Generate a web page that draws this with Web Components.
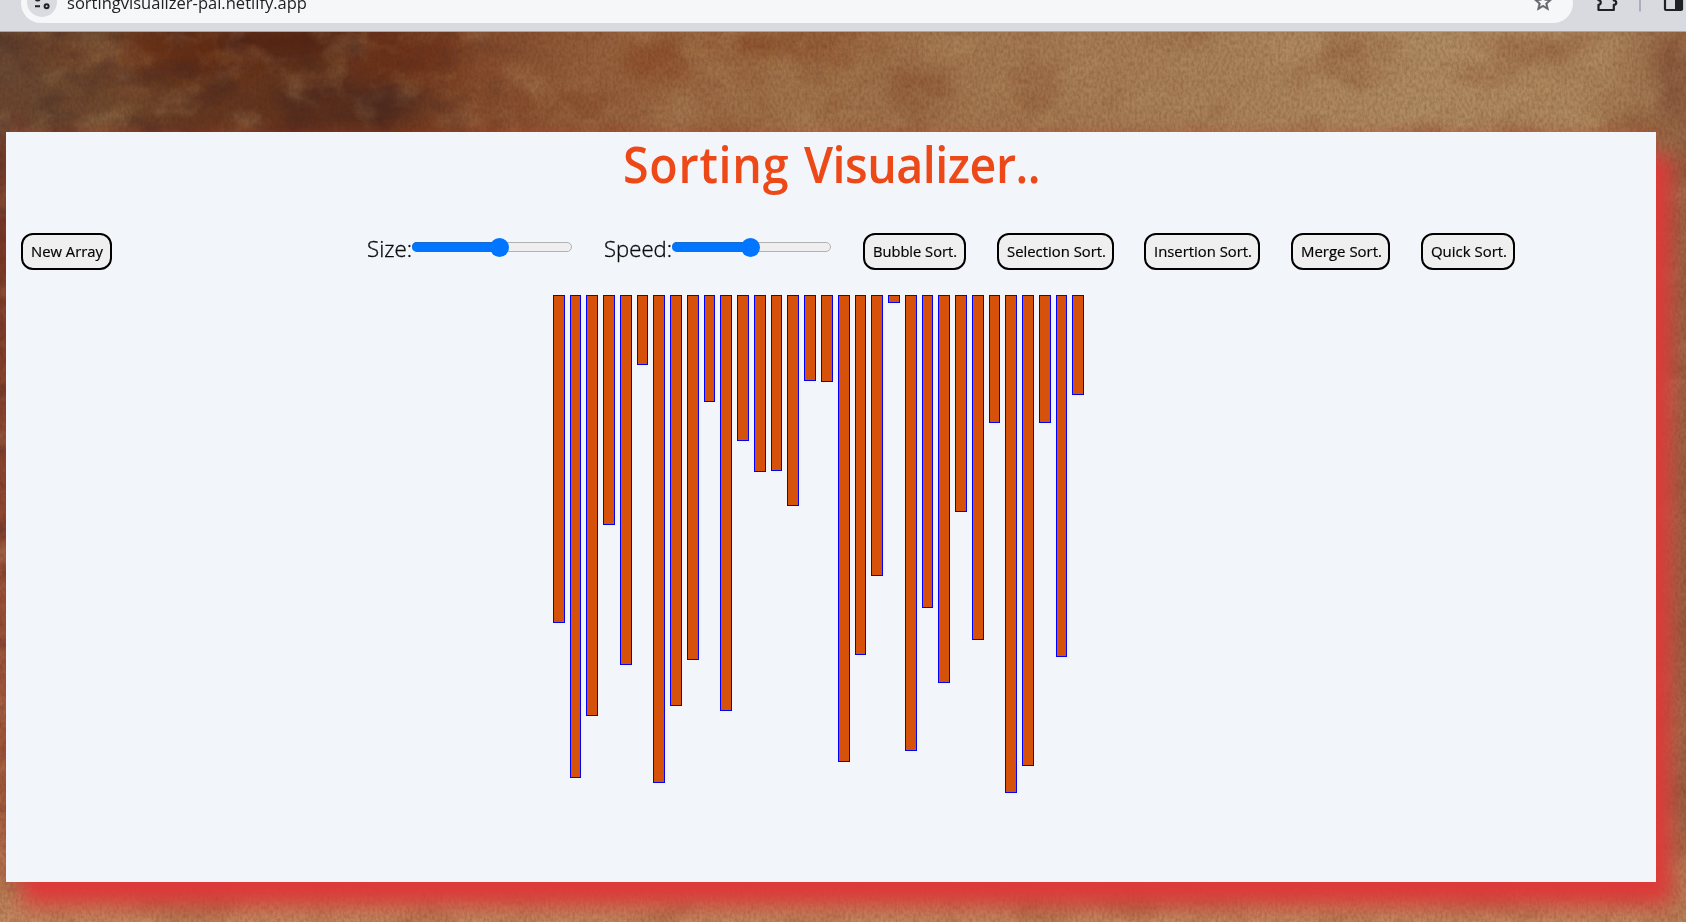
<!DOCTYPE html>
<html lang="en">
<head>
<meta charset="utf-8">
<title>Sorting Visualizer</title>
<style>
html,body{margin:0;height:100%;overflow:hidden}
body{font-family:"Open Sans","Noto Sans",sans-serif}
</style>
</head>
<body>
<sorting-app></sorting-app>
<script>
const define = (name, html, setup) => customElements.define(name, class extends HTMLElement {
  constructor(){ super(); this.attachShadow({mode:'open'}).innerHTML = html; }
  connectedCallback(){ if (setup) setup(this, this.shadowRoot); }
});

/* Text condensed or widened to a given advance width */
define('fit-text', `<style>
:host{display:block;white-space:nowrap;overflow:visible}
span{display:inline-block;transform-origin:0 50%}
</style><span><slot></slot></span>`, (el, root) => {
  const w = +el.getAttribute('w'), s = root.querySelector('span');
  el.style.width = w + 'px';
  const real = s.offsetWidth;
  if (real) s.style.transform = `scaleX(${w / s.getBoundingClientRect().width})`;
});

define('parchment-backdrop', `<style>
:host{display:block;position:absolute;inset:0;z-index:-1}
svg{display:block;width:100%;height:100%}
</style>
<svg viewBox="0 0 1686 890" preserveAspectRatio="none">
<defs>
<linearGradient id="h"><stop offset="0" stop-color="#684a34"/><stop offset=".07" stop-color="#70482d"/><stop offset=".13" stop-color="#64361f"/><stop offset=".23" stop-color="#66371f"/><stop offset=".28" stop-color="#854a2b"/><stop offset=".36" stop-color="#98623e"/><stop offset=".46" stop-color="#a2734b"/><stop offset=".64" stop-color="#a77c54"/><stop offset=".85" stop-color="#b18c63"/><stop offset=".95" stop-color="#ae865d"/><stop offset="1" stop-color="#946443"/></linearGradient>
<linearGradient id="v" x2="0" y2="1"><stop offset="0" stop-color="#6e3527" stop-opacity="0"/><stop offset=".14" stop-color="#6e3527" stop-opacity=".3"/><stop offset=".22" stop-color="#703828"/><stop offset=".45" stop-color="#824630"/><stop offset=".7" stop-color="#9c5c3e"/><stop offset="1" stop-color="#a86b46"/></linearGradient>
<linearGradient id="foot" x2="0" y2="1"><stop offset="0" stop-color="#b87c54" stop-opacity="0"/><stop offset=".6" stop-color="#b87c54"/><stop offset="1" stop-color="#c58a60"/></linearGradient>
<filter id="blotch" x="0" y="0" width="1" height="1" color-interpolation-filters="sRGB"><feTurbulence type="fractalNoise" baseFrequency=".013 .018" numOctaves="6" seed="8"/><feColorMatrix values="0 0 0 0 .5  0 0 0 0 .25  0 0 0 0 .13  2.8 0 0 0 -1.35"/></filter>
<filter id="light" x="0" y="0" width="1" height="1" color-interpolation-filters="sRGB"><feTurbulence type="fractalNoise" baseFrequency=".02 .026" numOctaves="6" seed="21"/><feColorMatrix values="0 0 0 0 .72  0 0 0 0 .58  0 0 0 0 .4  0 2.4 0 0 -1.15"/></filter>
<filter id="dark" x="0" y="0" width="1" height="1" color-interpolation-filters="sRGB"><feTurbulence type="fractalNoise" baseFrequency=".025 .035" numOctaves="6" seed="4"/><feColorMatrix values="0 0 0 0 .26  0 0 0 0 .15  0 0 0 0 .14  0 0 3 0 -1.45"/></filter>
<filter id="grain" x="0" y="0" width="1" height="1" color-interpolation-filters="sRGB"><feTurbulence type="fractalNoise" baseFrequency=".37 .23" numOctaves="3" seed="3"/><feColorMatrix values="0 0 0 0 .25  0 0 0 0 .14  0 0 0 0 .08  1 0 0 0 -.32"/></filter>
<linearGradient id="fadeL"><stop offset="0" stop-color="#fff"/><stop offset=".25" stop-color="#fff"/><stop offset=".33" stop-color="#000"/></linearGradient>
<mask id="m"><rect width="1686" height="890" fill="url(#fadeL)"/></mask>
<filter id="soft" x="-1" y="-1" width="3" height="3"><feGaussianBlur stdDeviation="9"/></filter>
</defs>
<rect width="1686" height="890" fill="url(#h)"/>
<rect width="30" height="890" fill="url(#v)"/>
<rect y="780" width="1686" height="110" fill="url(#foot)"/>
<g filter="url(#soft)" opacity=".6">
<ellipse cx="195" cy="18" rx="75" ry="30" fill="#632710"/><ellipse cx="280" cy="8" rx="60" ry="22" fill="#4e1c0b"/><ellipse cx="400" cy="22" rx="55" ry="35" fill="#6d2d13"/><ellipse cx="350" cy="70" rx="75" ry="23" fill="#4b281a"/><ellipse cx="740" cy="15" rx="42" ry="16" fill="#85421f"/><ellipse cx="835" cy="12" rx="55" ry="22" fill="#8c4e2b"/><ellipse cx="655" cy="30" rx="35" ry="20" fill="#8b4722"/><ellipse cx="920" cy="57" rx="34" ry="30" fill="#8d5436"/><ellipse cx="1670" cy="45" rx="12" ry="40" fill="#7e4830"/>
</g>
<rect width="1686" height="890" filter="url(#blotch)" opacity=".33"/>
<rect width="1686" height="890" filter="url(#light)" opacity=".4"/>
<g mask="url(#m)"><rect width="1686" height="780" filter="url(#dark)" opacity=".4"/></g>
<rect width="1686" height="890" filter="url(#grain)" opacity=".42"/>
</svg>`);

define('browser-bar', `<style>
:host{display:flex;box-sizing:border-box;height:32px;padding-left:21px;background:#d9dadf;border-bottom:1px solid #a4a7b1;overflow:hidden;align-items:flex-start}
.pill{box-sizing:border-box;width:1552px;height:40px;margin-top:-17px;border-radius:20px;background:#f6f7f9;display:flex;align-items:flex-start;padding-left:6px;flex:none}
.site{width:30px;height:30px;margin-top:4px;flex:none}
fit-text{margin:8px 0 0 10px;font-size:16.4px;line-height:24px;color:#202124}
.star{width:22px;height:22px;margin:8px 19px 0 auto;flex:none}
.tools{display:block;width:113px;height:32px;flex:none}
</style>
<div class="pill">
<svg class="site" viewBox="27 -13 30 30"><circle cx="42" cy="2" r="15" fill="#dadbe0"/><g fill="none" stroke="#202124" stroke-width="2"><path d="M35 6.2h5M44.500-1.500h5"/><circle cx="46.600" cy="6.200" r="2"/><circle cx="37.700" cy="-1.500" r="2"/></g></svg>
<fit-text w="240">sortingvisualizer-pal.netlify.app</fit-text>
<svg class="star" viewBox="0 0 24 24"><path d="M22 9.240l-7.190-.62L12 2 9.190 8.630 2 9.240l5.460 4.730L5.820 21 12 17.270 18.180 21l-1.630-7.030zM12 15.400l-3.760 2.270 1-4.280-3.320-2.880 4.380-.38L12 6.100l1.710 4.040 4.380.38-3.320 2.880 1 4.280z" fill="#5f6368" stroke="#5f6368" stroke-width=".6"/></svg>
</div>
<svg class="tools" viewBox="1573 0 113 32"><g fill="none" stroke="#202124" stroke-width="2.200"><path d="M1598.500-2v2.200c3 .3 3 4.200 0 4.700v5.100h15.300v-5.100c3.300-.4 3.300-4 0-4.400V-3" stroke-linejoin="round"/></g><path d="M1640-5V11.500" stroke="#a9adbd" stroke-width="2"/><rect x="1665" y="-7" width="17" height="17" rx="1" fill="none" stroke="#202124" stroke-width="2.200"/><path d="M1675-7h8v17h-8z" fill="#202124"/></svg>`);

define('sort-button', `<style>
:host{display:block;flex:none}
button{box-sizing:border-box;width:100%;height:37px;padding:0 0 0 8px;border:2px solid #000;border-radius:12px;background:#efefef;color:#000;font:15px/33px "Open Sans","Noto Sans",sans-serif;-webkit-text-stroke:.2px #000;text-align:left;display:block}
</style><button></button>`, (el, root) => {
  el.style.width = el.getAttribute('w') + 'px';
  const b = root.querySelector('button');
  b.innerHTML = `<fit-text w="${el.getAttribute('t')}">${el.textContent}</fit-text>`;
});

define('range-slider', `<style>
:host{display:flex;align-items:flex-start;flex:none}
fit-text{font-size:21.800px;line-height:31px;color:#0c0c0c;font-weight:300;-webkit-text-stroke:.35px #0c0c0c}
.track{box-sizing:border-box;height:10px;margin-top:9px;border:1px solid #b2b2b2;border-radius:5px;background:#efefef;display:grid;align-items:center}
.fill{height:10px;margin:-1px;border-radius:5px;background:#0075ff;box-shadow:inset 0 1px #1a69cc;display:flex;justify-content:flex-end;align-items:center}
.thumb{width:19px;height:19px;border-radius:50%;background:#0075ff;margin-right:-10px;flex:none}
</style><fit-text></fit-text><div class="track"><div class="fill"><div class="thumb"></div></div></div>`, (el, root) => {
  const f = document.createElement('fit-text');
  f.setAttribute('w', el.getAttribute('t')); f.textContent = el.getAttribute('label');
  root.querySelector('fit-text').replaceWith(f);
  root.querySelector('.track').style.width = el.getAttribute('w') + 'px';
  root.querySelector('.fill').style.width = el.getAttribute('value') + 'px';
});

define('array-bars', `<style>
:host{display:flex;gap:5px;align-items:flex-start;margin:25px 0 0 546.750px}
i{box-sizing:border-box;width:11.766px;flex:none;background:#d6510a;border:1px solid #00f}
</style>`, (el, root) => {
  for (const h of el.getAttribute('values').split(',')) {
    const i = document.createElement('i'); i.style.height = h + 'px'; root.append(i);
  }
});

define('sorting-app', `<style>
:host{display:flex;flex-direction:column;width:1686px;height:922px;overflow:hidden}
main{position:relative;z-index:0;flex:1;overflow:hidden;padding:100px 0 0 6px}
section{width:1650px;height:750px;background:#f2f5fa;box-shadow:16px 23px 20px #de3a3a,0 0 12px rgba(190,55,45,.35);overflow:visible;display:flow-root}
h1{margin:0 0 0 617px;height:101px;font-weight:600;font-size:50px;line-height:64px;color:#ed4918}
.a{letter-spacing:.8px;word-spacing:2px}.b{letter-spacing:-.55px}
nav{display:flex;align-items:flex-start;padding-left:15px;height:37px}
</style>
<browser-bar></browser-bar>
<main><parchment-backdrop></parchment-backdrop>
<section>
<h1><fit-text w="417"><span class="a">Sorting </span><span class="b">Visualizer..</span></fit-text></h1>
<nav>
<sort-button w="91" t="72">New Array</sort-button>
<range-slider style="margin-left:255px" label="Size:" t="45" w="160" value="87"></range-slider>
<range-slider style="margin-left:32px" label="Speed:" t="68" w="159" value="78"></range-slider>
<sort-button style="margin-left:32px" w="103" t="84">Bubble Sort.</sort-button>
<sort-button style="margin-left:31px" w="117" t="99">Selection Sort.</sort-button>
<sort-button style="margin-left:30px" w="116" t="98">Insertion Sort.</sort-button>
<sort-button style="margin-left:31px" w="99" t="81">Merge Sort.</sort-button>
<sort-button style="margin-left:31px" w="94" t="76">Quick Sort.</sort-button>
</nav>
<array-bars values="328,483,421,230,370,70,488,411,365,107,416,146,177,176,211,86,87,467,360,281,8,456,313,388,217,345,128,498,471,128,362,100"></array-bars>
</section></main>`);
</script>
</body>
</html>
